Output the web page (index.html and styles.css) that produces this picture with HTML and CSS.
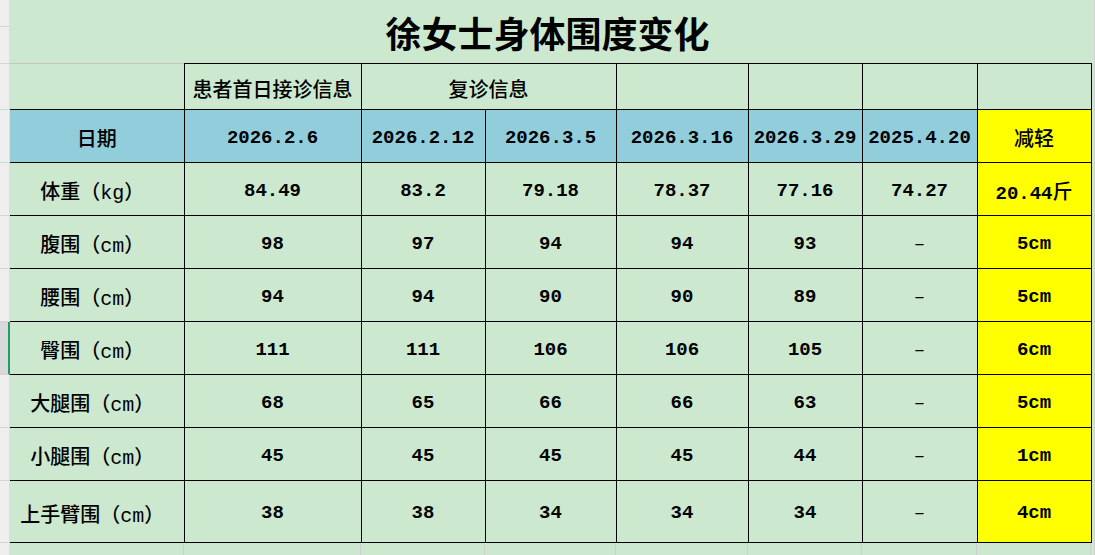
FILE: index.html
```html
<!DOCTYPE html>
<html lang="zh-CN">
<head>
<meta charset="utf-8">
<title>徐女士身体围度变化</title>
<link rel="stylesheet" href="styles.css">
</head>
<body>
<div class="sheet">
  <div class="rowhdr">
    <div class="rh h27"></div>
    <div class="rh h37"></div>
    <div class="rh h46"></div>
    <div class="rh h53"></div>
    <div class="rh h53"></div>
    <div class="rh h53"></div>
    <div class="rh h53"></div>
    <div class="rh h53 sel"></div>
    <div class="rh h53"></div>
    <div class="rh h53"></div>
    <div class="rh h62"></div>
    <div class="rh rest"></div>
  </div>
  <div class="main">
    <div class="title">徐女士身体围度变化</div>
    <table class="grid">
      <colgroup>
        <col class="c1"><col class="c2"><col class="c3"><col class="c4">
        <col class="c5"><col class="c6"><col class="c7"><col class="c8">
      </colgroup>
      <tr class="r-top">
        <td class="corner"></td>
        <td class="zh">患者首日接诊信息</td>
        <td class="zh" colspan="2">复诊信息</td>
        <td></td><td></td><td></td><td></td>
      </tr>
      <tr class="r-date">
        <td class="zh">日期</td>
        <td>2026.2.6</td>
        <td>2026.2.12</td>
        <td>2026.3.5</td>
        <td>2026.3.16</td>
        <td>2026.3.29</td>
        <td>2025.4.20</td>
        <td class="hl zh">减轻</td>
      </tr>
      <tr class="r-data">
        <td class="lbl zh">体重（kg）</td>
        <td>84.49</td><td>83.2</td><td>79.18</td><td>78.37</td><td>77.16</td><td>74.27</td>
        <td class="hl">20.44<span class="zh">斤</span></td>
      </tr>
      <tr class="r-data">
        <td class="lbl zh">腹围（cm）</td>
        <td>98</td><td>97</td><td>94</td><td>94</td><td>93</td><td class="dash">–</td>
        <td class="hl">5cm</td>
      </tr>
      <tr class="r-data">
        <td class="lbl zh">腰围（cm）</td>
        <td>94</td><td>94</td><td>90</td><td>90</td><td>89</td><td class="dash">–</td>
        <td class="hl">5cm</td>
      </tr>
      <tr class="r-data">
        <td class="lbl zh">臀围（cm）</td>
        <td>111</td><td>111</td><td>106</td><td>106</td><td>105</td><td class="dash">–</td>
        <td class="hl">6cm</td>
      </tr>
      <tr class="r-data">
        <td class="lbl zh">大腿围（cm）</td>
        <td>68</td><td>65</td><td>66</td><td>66</td><td>63</td><td class="dash">–</td>
        <td class="hl">5cm</td>
      </tr>
      <tr class="r-data">
        <td class="lbl zh">小腿围（cm）</td>
        <td>45</td><td>45</td><td>45</td><td>45</td><td>44</td><td class="dash">–</td>
        <td class="hl">1cm</td>
      </tr>
      <tr class="r-last">
        <td class="lbl zh">上手臂围（cm）</td>
        <td>38</td><td>38</td><td>34</td><td>34</td><td>34</td><td class="dash">–</td>
        <td class="hl">4cm</td>
      </tr>
    </table>
    <div class="tail">
      <div class="tc c1"></div><div class="tc c2"></div><div class="tc c3"></div><div class="tc c4"></div>
      <div class="tc c5"></div><div class="tc c6"></div><div class="tc c7"></div><div class="tc c8"></div>
    </div>
  </div>
  <div class="edge"></div>
</div>
</body>
</html>
```

FILE: styles.css
```css
html, body {
  margin: 0;
  padding: 0;
}
body {
  background: #cce8cf;
  font-family: "Liberation Mono", "Noto Sans CJK SC", monospace;
  color: #000;
  width: 1095px;
  height: 555px;
  overflow: hidden;
}
.sheet {
  display: flex;
  height: 555px;
}
.rowhdr {
  width: 10px;
  flex: none;
  display: flex;
  flex-direction: column;
}
.rh {
  box-sizing: border-box;
  background: #efefef;
  border-bottom: 1px solid #d4d4d4;
  border-right: 1px solid #dedede;
  flex: none;
}
.h27 { height: 27px; }
.h37 { height: 37px; }
.h46 { height: 46px; }
.h53 { height: 53px; }
.h62 { height: 62px; }
.rest { flex: 1; border-bottom: 0; }
.rh.sel {
  background: #d9d9d9;
  border-right: 2px solid #1f9b6c;
}
.main {
  width: 1081px;
  flex: none;
  display: flex;
  flex-direction: column;
}
.title {
  height: 63px;
  display: flex;
  align-items: center;
  justify-content: center;
  font-family: "Noto Sans CJK SC", sans-serif;
  font-size: 36px;
  font-weight: 700;
  padding-right: 6px;
  box-sizing: border-box;
}
.grid {
  border-collapse: collapse;
  table-layout: fixed;
  width: 1081px;
  font-size: 19px;
  font-weight: 700;
}
.c1 { width: 174px; }
.c2 { width: 177px; }
.c3 { width: 124px; }
.c4 { width: 131px; }
.c5 { width: 132px; }
.c6 { width: 114px; }
.c7 { width: 115px; }
.c8 { width: 114px; }
.grid td {
  border: 1px solid #000;
  text-align: center;
  vertical-align: middle;
  padding: 3px 0 0 0;
  white-space: nowrap;
}
.grid td:first-child {
  border-left: 0;
}
.grid td.corner {
  border-top: 1px solid #c4c4c4;
}
.grid .zh {
  font-size: 20px;
  font-weight: 500;
}
.grid td.dash {
  font-weight: 400;
}
.r-top td { height: 42px; }
.r-date td { height: 49px; background: #92cddc; }
.r-data td { height: 49px; }
.r-last td { height: 58px; }
.grid td.hl { background: #ffff00; }
.grid td.lbl { padding-right: 9px; }
.tail {
  display: flex;
  flex: 1;
}
.tc {
  flex: none;
  box-sizing: border-box;
  border-right: 1px solid #cfcfcf;
}
.edge {
  flex: 1;
  border-right: 1px solid #d2d2d2;
}
```
